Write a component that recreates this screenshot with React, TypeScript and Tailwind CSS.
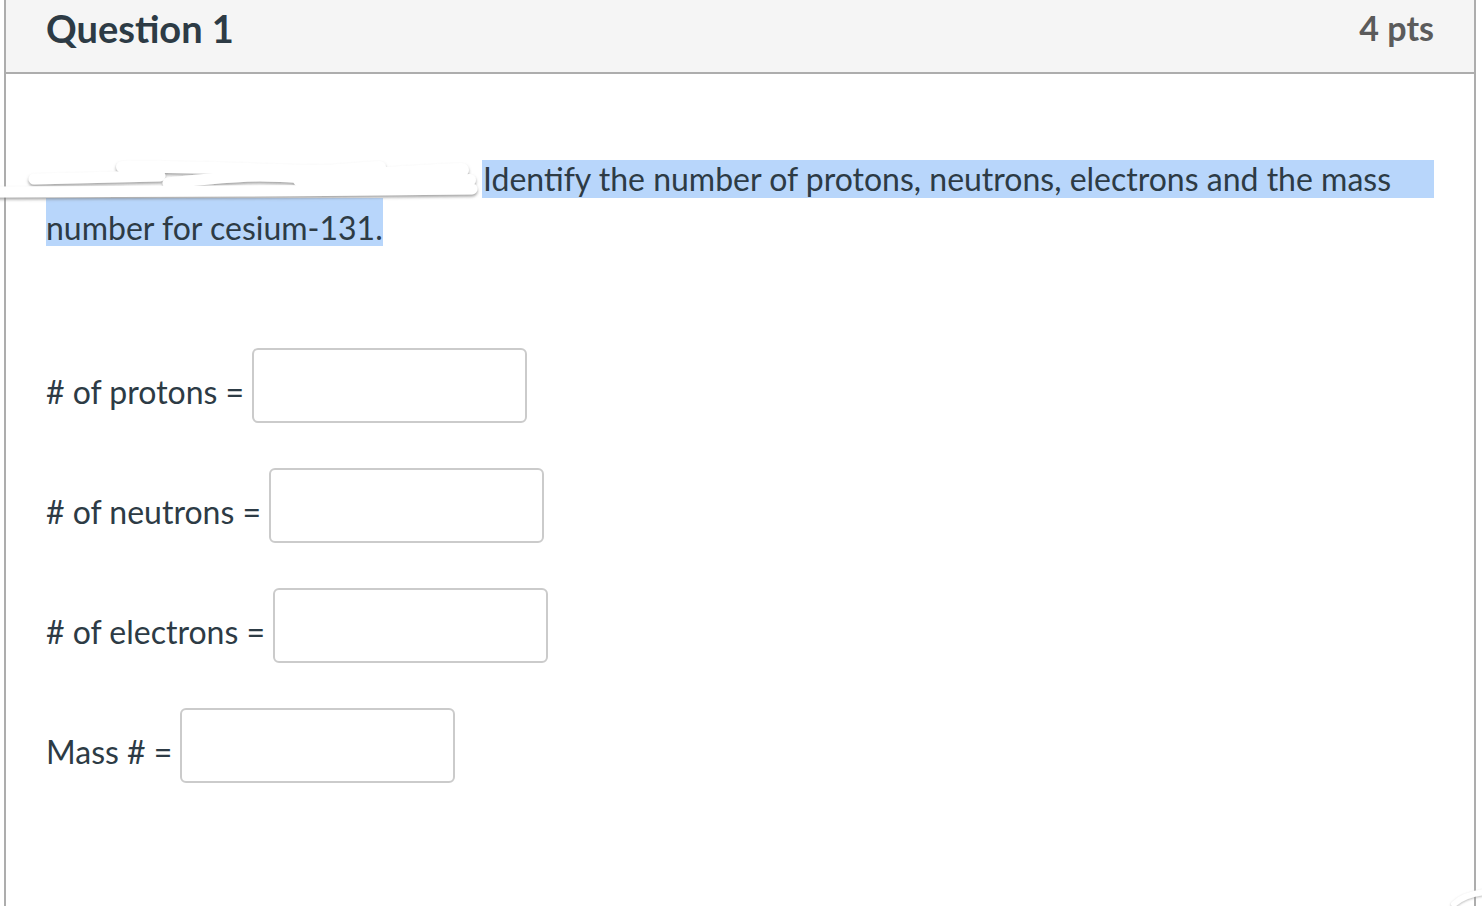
import React from "react";

const FONT = { fontFamily: "Lato, 'Open Sans', sans-serif" };

const FIELDS = [
  { label: "# of protons =", gap: "mt-[102px]" },
  { label: "# of neutrons =", gap: "mt-[45px]" },
  { label: "# of electrons =", gap: "mt-[45px]" },
  { label: "Mass # =", gap: "mt-[45px]" },
];

// white marker strokes that hide the start of the question text
function Scribble() {
  return (
    <svg
      className="absolute left-0 top-[150px] pointer-events-none"
      width="484"
      height="56"
      viewBox="0 0 484 56"
    >
      <defs>
        <filter id="shade" x="-5%" y="-50%" width="110%" height="200%">
          <feDropShadow dx="0" dy="2" stdDeviation="1.6" floodColor="#7a7a7a" floodOpacity="0.7" />
        </filter>
      </defs>
      {/* bits of the hidden text peeking out */}
      <rect x="150" y="38" width="32" height="4" fill="#1f2a33" />
      <rect x="258" y="39" width="30" height="3" fill="#2d3b45" />
      <rect x="340" y="38" width="18" height="3" fill="#2d3b45" />
      <rect x="440" y="36" width="26" height="5" fill="#2d3b45" />
      <g filter="url(#shade)" fill="none" stroke="#ffffff" strokeLinecap="round" strokeLinejoin="round">
        <path d="M-4 42 C 80 42, 160 41, 240 41 S 380 40, 472 39" strokeWidth="11" />
        <path d="M34 29 C 70 28, 110 27, 160 26" strokeWidth="11" />
        <path d="M122 17 C 170 16, 220 18, 280 20 S 340 19, 380 17" strokeWidth="12" />
        <path d="M168 33 C 200 30, 230 26, 260 26 S 330 30, 380 31" strokeWidth="11" />
        <path d="M300 30 C 340 28, 400 22, 462 20" strokeWidth="14" />
        <path d="M330 37 C 380 35, 430 32, 470 30" strokeWidth="12" />
        <path d="M440 22 L 460 28" strokeWidth="9" />
      </g>
    </svg>
  );
}

function CornerScribble() {
  return (
    <svg className="absolute left-[1446px] top-[882px] pointer-events-none" width="36" height="24" viewBox="0 0 36 24">
      <defs>
        <filter id="shade2" x="-20%" y="-50%" width="140%" height="200%">
          <feDropShadow dx="0" dy="1" stdDeviation="1" floodColor="#8a8a8a" floodOpacity="0.6" />
        </filter>
      </defs>
      <path d="M8 22 C 14 16, 24 12, 38 10" fill="none" stroke="#ffffff" strokeWidth="6" strokeLinecap="round" filter="url(#shade2)" />
    </svg>
  );
}

export default function App() {
  return (
    <div className="relative w-[1482px] h-[906px] overflow-hidden bg-white" style={FONT}>
      <div className="ml-[4px] w-[1472px] min-h-[906px] border-x-2 border-[#adadad]">
        {/* Header */}
        <div className="flex items-center justify-between h-[74px] bg-[#f5f5f5] border-b-2 border-[#adadad] px-[40px]">
          <h2 className="text-[38px] font-bold text-[#2d3b45] leading-none -mt-[16px]">Question 1</h2>
          <span className="text-[34px] font-bold text-[#5b5b5b] leading-none -mt-[16px]">4 pts</span>
        </div>

        {/* Body */}
        <div className="px-[40px] pt-[86px] text-[32px] text-[#2d3b45]">
          <div className="flex h-[38px]">
            <div className="w-[436px] shrink-0" />
            <div className="flex-1 bg-[#b8d6fb] leading-[38px] pl-[1px] whitespace-nowrap">
              Identify the number of protons, neutrons, electrons and the mass
            </div>
          </div>
          <div className="h-[48px]">
            <span className="bg-[#b8d6fb] inline-block h-[48px] pt-[12px] leading-[36px]">number for cesium-131.</span>
          </div>

          {FIELDS.map((f) => (
            <div key={f.label} className={`flex items-center ${f.gap}`}>
              <span className="leading-none mt-[12px]">{f.label}</span>
              <div className="ml-[8px] w-[275px] h-[75px] rounded-[6px] border-2 border-[#cbcbcb] bg-white" />
            </div>
          ))}
        </div>
      </div>
      <Scribble />
      <CornerScribble />
    </div>
  );
}
